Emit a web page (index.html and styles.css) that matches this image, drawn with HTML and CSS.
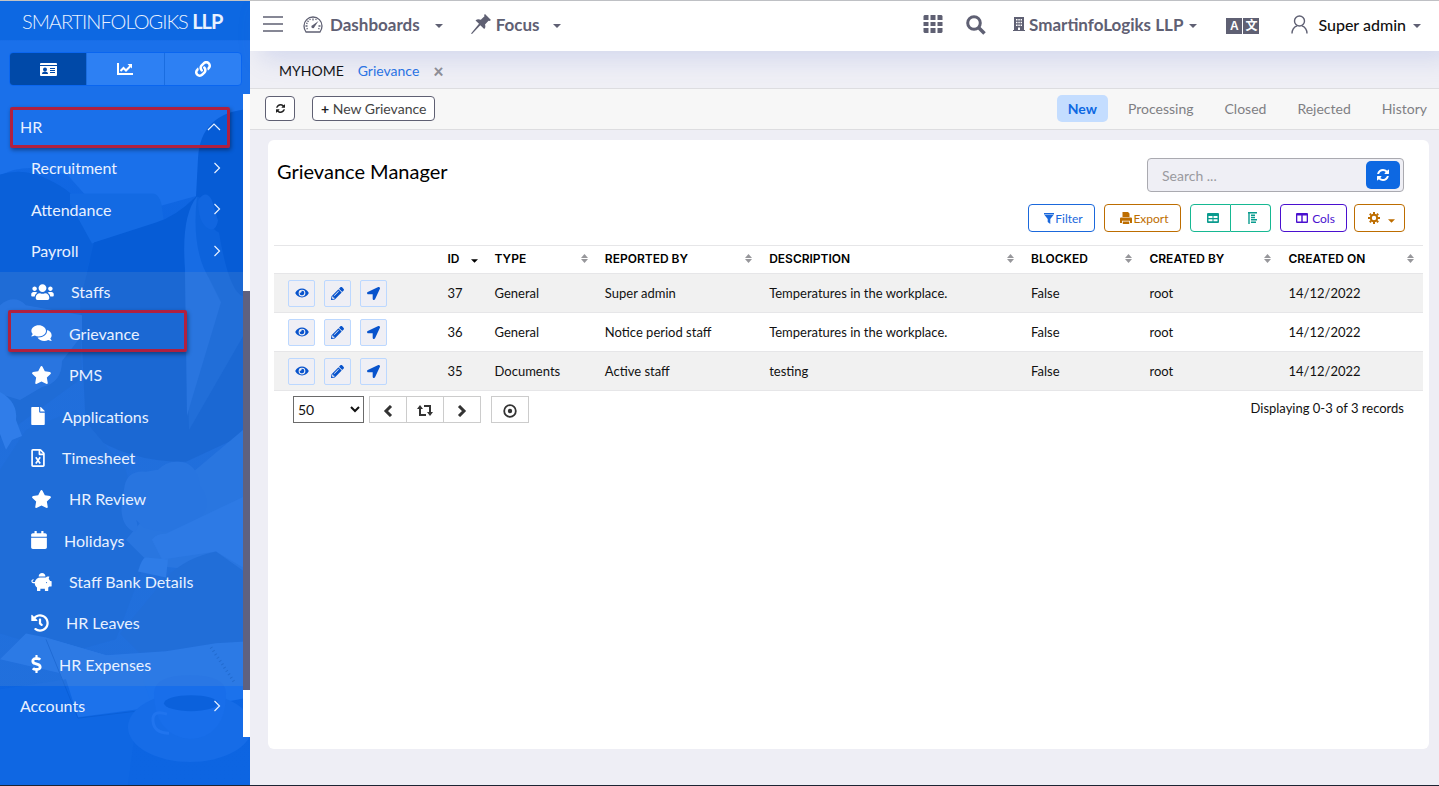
FILE: index.html
```
<!DOCTYPE html>
<html lang="en">
  <head>
    <meta charset="utf-8">
    <title>Grievance Manager</title>
    <link rel="stylesheet" href="styles.css">
  </head>
  <body>
    <!-- icon set -->
    <svg class="sprite" aria-hidden="true">
      <symbol id="i-users" viewBox="0 0 640 512"><path d="M96 224c35.3 0 64-28.7 64-64s-28.7-64-64-64-64 28.7-64 64 28.7 64 64 64zm448 0c35.3 0 64-28.7 64-64s-28.7-64-64-64-64 28.7-64 64 28.7 64 64 64zm32 32h-64c-17.6 0-33.5 7.1-45.1 18.6 40.3 22.1 68.9 62 75.1 109.4h66c17.7 0 32-14.3 32-32v-32c0-35.3-28.7-64-64-64zm-256 0c61.9 0 112-50.1 112-112S381.9 32 320 32 208 82.1 208 144s50.1 112 112 112zm76.8 32h-8.3c-20.8 10-43.9 16-68.5 16s-47.6-6-68.5-16h-8.3C179.6 288 128 339.6 128 403.2V432c0 26.5 21.5 48 48 48h288c26.5 0 48-21.5 48-48v-28.8c0-63.6-51.6-115.2-115.2-115.2zm-223.7-13.4C161.5 263.1 145.6 256 128 256H64c-35.3 0-64 28.7-64 64v32c0 17.7 14.3 32 32 32h65.9c6.3-47.4 34.9-87.3 75.2-109.4z"/></symbol>
      <symbol id="i-comments" viewBox="0 0 576 512"><path d="M416 192c0-88.4-93.1-160-208-160S0 103.6 0 192c0 34.3 14.1 65.9 38 92-13.4 30.2-35.5 54.2-35.8 54.5-2.2 2.3-2.8 5.7-1.5 8.7S4.8 352 8 352c36.6 0 66.9-12.3 88.7-25 32.2 15.7 70.3 25 111.3 25 114.9 0 208-71.6 208-160zm122 220c23.9-26 38-57.7 38-92 0-66.9-53.5-124.2-129.3-148.1.9 6.6 1.3 13.3 1.3 20.1 0 105.9-107.7 192-240 192-10.8 0-21.3-.8-31.7-1.9C207.8 439.6 281.8 480 368 480c41 0 79.1-9.2 111.3-25 21.8 12.7 52.1 25 88.7 25 3.2 0 6.1-1.9 7.3-4.8 1.3-2.9.7-6.3-1.5-8.7-.3-.3-22.4-24.2-35.8-54.5z"/></symbol>
      <symbol id="i-star" viewBox="0 0 576 512"><path d="M259.3 17.8L194 150.2 47.9 171.5c-26.2 3.8-36.7 36.1-17.7 54.6l105.7 103-25 145.5c-4.5 26.3 23.2 46 46.4 33.7L288 439.6l130.7 68.7c23.2 12.2 50.9-7.4 46.4-33.7l-25-145.5 105.7-103c19-18.5 8.5-50.8-17.7-54.6L382 150.2 316.7 17.8c-11.7-23.6-45.6-23.9-57.4 0z"/></symbol>
      <symbol id="i-file" viewBox="0 0 384 512"><path d="M224 136V0H24C10.7 0 0 10.7 0 24v464c0 13.3 10.7 24 24 24h336c13.3 0 24-10.7 24-24V160H248c-13.2 0-24-10.8-24-24zm160-14.1v6.1H256V0h6.1c6.4 0 12.5 2.5 17 7l97.9 98c4.5 4.5 7 10.6 7 16.9z"/></symbol>
      <symbol id="i-excel" viewBox="0 0 384 512"><path d="M369.9 97.9L286 14C277 5 264.8-.1 252.1-.1H48C21.5 0 0 21.5 0 48v416c0 26.5 21.5 48 48 48h288c26.5 0 48-21.5 48-48V131.9c0-12.7-5.1-25-14.1-34zM332.1 128H256V51.9l76.1 76.1zM48 464V48h160v104c0 13.3 10.7 24 24 24h104v288H48z"/><path d="M130 236l124 178M254 236L130 414" stroke="currentColor" stroke-width="48"/></symbol>
      <symbol id="i-calendar" viewBox="0 0 448 512"><path d="M12 192h424c6.6 0 12 5.4 12 12v260c0 26.5-21.5 48-48 48H48c-26.5 0-48-21.5-48-48V204c0-6.6 5.4-12 12-12zm436-44v-36c0-26.5-21.5-48-48-48h-48V12c0-6.600-5.400-12-12-12h-40c-6.600 0-12 5.400-12 12v52H160V12c0-6.600-5.400-12-12-12h-40c-6.600 0-12 5.400-12 12v52H48C21.500 64 0 85.500 0 112v36c0 6.600 5.400 12 12 12h424c6.600 0 12-5.400 12-12z"/></symbol>
      <symbol id="i-piggy" viewBox="0 0 576 512"><path d="M560 224h-29.500c-8.800-20-21.600-37.700-37.400-52.500L512 96h-32c-29.400 0-55.400 13.500-73 34.300-7.600-1.100-15.100-2.300-23-2.300H256c-77.400 0-141.900 55-156.800 128H56c-14.800 0-26.500-13.500-23.500-28.800C34.700 215.800 45.400 208 57 208h1c3.300 0 6-2.700 6-6v-20c0-3.300-2.700-6-6-6-28.500 0-53.900 20.400-57.500 48.600C-3.900 258.800 22.700 288 56 288h40c0 52.200 25.400 98.100 64 127.300V496c0 8.800 7.200 16 16 16h64c8.800 0 16-7.200 16-16v-48h128v48c0 8.800 7.200 16 16 16h64c8.800 0 16-7.200 16-16v-80.700c11.800-8.900 22.300-19.400 31.300-31.300H560c8.800 0 16-7.200 16-16V240c0-8.800-7.200-16-16-16zm-128 64c-8.800 0-16-7.200-16-16s7.200-16 16-16 16 7.200 16 16-7.200 16-16 16zM256 96h128c5.400 0 10.700.4 15.900.8 0-.3.1-.5.1-.8 0-53-43-96-96-96s-96 43-96 96c0 2.100.5 4.100.6 6.200 15.200-3.900 31-6.200 47.400-6.200z"/></symbol>
      <symbol id="i-history" viewBox="0 0 512 512"><path d="M504 255.531c.253 136.640-111.180 248.372-247.820 248.468-59.015.042-113.223-20.530-155.822-54.911-11.077-8.940-11.905-25.541-1.839-35.607l11.267-11.267c8.609-8.609 22.353-9.551 31.891-1.984C173.062 425.135 212.781 440 256 440c101.705 0 184-82.311 184-184 0-101.705-82.311-184-184-184-48.814 0-93.149 18.969-126.068 49.932l50.754 50.754c10.080 10.080 2.941 27.314-11.313 27.314H24c-8.837 0-16-7.163-16-16V38.627c0-14.254 17.234-21.393 27.314-11.314l49.372 49.372C129.209 34.136 189.552 8 256 8c136.810 0 247.747 110.780 248 247.531zm-180.912 78.784l9.823-12.630c8.138-10.463 6.253-25.542-4.210-33.679L288 256.349V152c0-13.255-10.745-24-24-24h-16c-13.255 0-24 10.745-24 24v135.651l65.409 50.874c10.463 8.137 25.541 6.253 33.679-4.210z"/></symbol>
      <symbol id="i-dollar" viewBox="0 0 288 512"><path d="M209.200 233.400l-108-31.600C88.700 198.200 80 186.500 80 173.500c0-16.300 13.200-29.500 29.500-29.500h66.300c12.200 0 24.200 3.700 34.200 10.500 6.100 4.100 14.300 3.100 19.500-2l34.800-34c7.100-6.900 6.100-18.400-1.800-24.500C238 74.800 207.400 64.100 176 64V16c0-8.800-7.200-16-16-16h-32c-8.800 0-16 7.200-16 16v48h-2.500C45.800 64-5.400 118.700.5 183.600c4.200 46.100 39.400 83.600 83.800 96.600l102.500 30c12.500 3.700 21.200 15.300 21.200 28.300 0 16.300-13.200 29.500-29.500 29.500h-66.300C100 368 88 364.300 78 357.500c-6.100-4.100-14.300-3.100-19.500 2l-34.800 34c-7.100 6.900-6.100 18.400 1.800 24.500 24.500 19.200 55.100 29.900 86.500 30v48c0 8.800 7.200 16 16 16h32c8.800 0 16-7.200 16-16v-48.200c46.600-.9 90.300-28.600 105.700-72.700 21.500-61.600-14.600-124.800-72.500-141.700z"/></symbol>
      <symbol id="i-eye" viewBox="0 0 576 512"><path d="M572.520 241.400C518.290 135.590 410.930 64 288 64S57.680 135.640 3.480 241.410a32.350 32.350 0 0 0 0 29.190C57.710 376.410 165.070 448 288 448s230.320-71.640 284.520-177.410a32.350 32.350 0 0 0 0-29.190zM288 400a144 144 0 1 1 144-144 143.930 143.930 0 0 1-144 144zm0-240a95.310 95.310 0 0 0-25.310 3.790 47.850 47.850 0 0 1-66.900 66.900A95.780 95.780 0 1 0 288 160z"/></symbol>
      <symbol id="i-pencil" viewBox="0 0 512 512"><path d="M497.900 142.100l-46.100 46.100c-4.700 4.700-12.300 4.700-17 0l-111-111c-4.700-4.700-4.700-12.300 0-17l46.100-46.100c18.700-18.700 49.100-18.700 67.900 0l60.100 60.100c18.800 18.700 18.800 49.100 0 67.900zM284.200 99.800L21.600 362.400.4 483.900c-2.900 16.400 11.400 30.600 27.800 27.800l121.500-21.300 262.600-262.600c4.700-4.700 4.700-12.300 0-17l-111-111c-4.800-4.700-12.400-4.700-17.100 0zM124.100 339.900c-5.500-5.500-5.500-14.300 0-19.800l154-154c5.500-5.500 14.300-5.500 19.800 0s5.500 14.300 0 19.800l-154 154c-5.500 5.500-14.300 5.500-19.800 0zM88 424h48v36.300l-64.500 11.300-31.100-31.100L51.700 376H88v48z"/></symbol>
      <symbol id="i-arrow" viewBox="0 0 512 512"><path d="M444.520 3.520L28.740 195.420c-47.970 22.390-31.980 92.750 19.190 92.750h175.910v175.910c0 51.170 70.360 67.170 92.750 19.190l191.900-415.780c15.990-38.390-25.590-79.970-63.970-63.970z"/></symbol>
      <symbol id="i-link" viewBox="0 0 512 512"><path d="M326.612 185.391c59.747 59.809 58.927 155.698.36 214.590-.11.12-.24.25-.36.37l-67.200 67.200c-59.270 59.270-155.699 59.262-214.960 0-59.270-59.260-59.270-155.700 0-214.960l37.106-37.106c9.840-9.840 26.786-3.300 27.294 10.606.648 17.722 3.826 35.527 9.690 52.721 1.986 5.822.567 12.262-3.783 16.612l-13.087 13.087c-28.026 28.026-28.905 73.660-1.155 101.960 28.024 28.579 74.086 28.749 102.325.51l67.200-67.190c28.191-28.191 28.073-73.757 0-101.830-3.701-3.694-7.429-6.564-10.341-8.569a16.037 16.037 0 0 1-6.947-12.606c-.396-10.567 3.348-21.456 11.698-29.806l21.054-21.055c5.521-5.521 14.182-6.199 20.584-1.731a152.482 152.482 0 0 1 20.522 17.197zM467.547 44.449c-59.261-59.262-155.690-59.270-214.960 0l-67.200 67.200c-.12.12-.25.25-.36.37-58.566 58.892-59.387 154.781.36 214.590a152.454 152.454 0 0 0 20.521 17.196c6.402 4.468 15.064 3.789 20.584-1.731l21.054-21.055c8.350-8.350 12.094-19.239 11.698-29.806a16.037 16.037 0 0 0-6.947-12.606c-2.912-2.005-6.640-4.875-10.341-8.569-28.073-28.073-28.191-73.639 0-101.830l67.200-67.190c28.239-28.239 74.300-28.069 102.325.51 27.750 28.300 26.872 73.934-1.155 101.960l-13.087 13.087c-4.350 4.350-5.769 10.790-3.783 16.612 5.864 17.194 9.042 34.999 9.690 52.721.509 13.906 17.454 20.446 27.294 10.606l37.106-37.106c59.271-59.259 59.271-155.699.001-214.959z"/></symbol>
      <symbol id="i-refresh" viewBox="0 128 1536 1536"><path d="M1511 1056q0 5-1 7-64 268-268 434.500T764 1664q-146 0-282.500-55T238 1452l-129 129q-19 19-45 19t-45-19-19-45v-448q0-26 19-45t45-19h448q26 0 45 19t19 45-19 45l-137 137q71 66 161 102t187 36q134 0 250-65t186-179q11-17 53-117 8-23 30-23h192q13 0 22.500 9.500t9.500 22.500zm25-800v448q0 26-19 45t-45 19h-448q-26 0-45-19t-19-45 19-45l138-138Q969 384 768 384q-134 0-250 65T332 628q-11 17-53 117-8 23-30 23H50q-13 0-22.500-9.500T18 736v-7q65-268 270-434.500T768 128q146 0 284 55.500T1297 340l130-129q19-19 45-19t45 19 19 45z"/></symbol>
      <symbol id="i-idcard" viewBox="0 0 17 13"><path fill-rule="evenodd" d="M1 0h15a1 1 0 0 1 1 1v1H0V1a1 1 0 0 1 1-1zM0 3h17v9a1 1 0 0 1-1 1H1a1 1 0 0 1-1-1zm5 1.500a2 2 0 1 0 0 4 2 2 0 0 0 0-4zM2 11h6c0-1.500-1-2.200-2-2.200H4c-1 0-2 .7-2 2.200zM10 5v1h5V5zm0 2v1h5V7zm0 2v1h5V9z"/></symbol>
      <symbol id="i-chart" viewBox="0 0 16 12"><path d="M1 0v11h15M3.500 8l3-3 2.500 2.500L13.500 3" fill="none" stroke="currentColor" stroke-width="2"/><path d="M10.500 1H15v4.500z"/></symbol>
      <symbol id="i-down" viewBox="0 0 8 4"><path d="M0 0h8L4 4z"/></symbol>
      <symbol id="i-right" viewBox="0 0 8 12"><path d="M1.500 1l5 5-5 5" fill="none" stroke="currentColor" stroke-width="1.200"/></symbol>
      <symbol id="i-up" viewBox="0 0 14 8"><path d="M1 7l6-6 6 6" fill="none" stroke="currentColor" stroke-width="1.200"/></symbol>
      <symbol id="i-sort" viewBox="0 0 7 9"><path d="M0 4l3.500-4L7 4zM0 5h7L3.500 9z"/></symbol>
      <symbol id="i-bars" viewBox="0 0 20 16"><path d="M0 1h20M0 8h20M0 15h20" stroke="currentColor" stroke-width="1.400"/></symbol>
      <symbol id="i-gauge" viewBox="0 0 20 17"><g fill="none" stroke="currentColor" stroke-width="1.300"><path d="M3 16Q1 13 1 10a9 9 0 0 1 18 0q0 3-2 6z"/><path d="M10 2.500v2M4.500 4.700l1 1.200M2.500 10h2M17.500 10h-2M6.800 3l.5 1M13.200 3l-.5 1M3.200 7l1.300.6M3.500 13l1.200-.6M16.500 13l-1.200-.6"/></g><path d="M15.500 5l-4.200 6.200a1.500 1.500 0 1 1-1.800-1.900z"/></symbol>
      <symbol id="i-pin" viewBox="0 0 20 20"><path d="M14 0l6 6-1.500 1-1-.3-3.500 3.800c.8 2 .3 3.500-.8 4.500L9.300 11.200 1 20l-1-.5 8-9.700L4.500 6.500C6 5 8 5 9.800 5.800l3.700-3.500-.4-1.300z"/></symbol>
      <symbol id="i-grid" viewBox="0 0 19 18"><path d="M1 0h4v5H0V1zM7 0h5v5H7zM14 0h4l1 1v4h-5zM0 7h5v4H0zM7 7h5v4H7zM14 7h5v4h-5zM0 13h5v5H1l-1-1zM7 13h5v5H7zM14 13h5v4l-1 1h-4z"/></symbol>
      <symbol id="i-search" viewBox="0 0 20 20"><circle cx="8" cy="8" r="6.300" fill="none" stroke="currentColor" stroke-width="3"/><path d="M12.500 12.500l6 6" stroke="currentColor" stroke-width="3.500"/></symbol>
      <symbol id="i-building" viewBox="0 0 12 14"><path fill-rule="evenodd" d="M1 0h10v13h1v1H0v-1h1zm2 2v1.500h1.500V2zm2.300 0v1.500h1.500V2zm2.300 0v1.500H9V2zM3 4.700v1.500h1.500V4.700zm2.300 0v1.500h1.500V4.700zm2.300 0v1.500H9V4.700zM3 7.400v1.500h1.500V7.400zm2.300 0v1.500h1.500V7.400zm2.300 0v1.500H9V7.400zM5 10.500V13h2v-2.500z"/></symbol>
      <symbol id="i-user" viewBox="0 0 17 19"><g fill="none" stroke="currentColor" stroke-width="1.400"><circle cx="8.500" cy="6" r="5"/><path d="M1 18.500c0-4 2-6.500 5-7.700M16 18.500c0-4-2-6.500-5-7.700"/></g></symbol>
      <symbol id="i-funnel" viewBox="0 0 10 11"><path d="M0 0h10v1.500H0zM.5 2h9L6.300 6v5l-2.600-2V6z"/></symbol>
      <symbol id="i-print" viewBox="0 0 12 12"><path fill-rule="evenodd" d="M2.500 0H8l1.500 1.500V5h-7zM1 5.500h10a1 1 0 0 1 1 1V11h-2V8.700H2V11H0V6.500a1 1 0 0 1 1-1zM2.800 9.500h6.400V12H2.800z"/></symbol>
      <symbol id="i-table" viewBox="0 0 12 10"><path fill-rule="evenodd" d="M1 0h10a1 1 0 0 1 1 1v8a1 1 0 0 1-1 1H1a1 1 0 0 1-1-1V1a1 1 0 0 1 1-1zm.5 3v2h4V3zm5 0v2h4V3zm-5 3.300v2h4v-2zm5 0v2h4v-2z"/></symbol>
      <symbol id="i-cols" viewBox="0 0 12 10"><path fill-rule="evenodd" d="M1 0h10a1 1 0 0 1 1 1v8a1 1 0 0 1-1 1H1a1 1 0 0 1-1-1V1a1 1 0 0 1 1-1zm.3 2.500v6h4v-6zm5.400 0v6h4v-6z"/></symbol>
      <symbol id="i-gantt" viewBox="0 0 10 12"><path d="M0 .7h9M1 0v12M3 3.200h4M3 5.500h4M3 7.800h6M3 10.200h5" fill="none" stroke="currentColor" stroke-width="1.400"/></symbol>
      <symbol id="i-cog" viewBox="0 0 12 12"><circle cx="6" cy="6" r="3.200" fill="none" stroke="currentColor" stroke-width="2"/><path d="M6 0v2M6 10v2M0 6h2M10 6h2M1.800 1.800l1.400 1.400M8.800 8.800l1.400 1.400M1.800 10.200l1.400-1.400M8.800 3.200l1.400-1.400" stroke="currentColor" stroke-width="2"/></symbol>
      <symbol id="i-prev" viewBox="0 0 10 12"><path d="M8 1L3 6l5 5" fill="none" stroke="currentColor" stroke-width="3"/></symbol>
      <symbol id="i-next" viewBox="0 0 10 12"><path d="M2 1l5 5-5 5" fill="none" stroke="currentColor" stroke-width="3"/></symbol>
      <symbol id="i-loop" viewBox="0 0 16 11"><path d="M3 2v8h6M7 1h6v8" fill="none" stroke="currentColor" stroke-width="2"/><path d="M0 4l3-4 3 4zM10 7h6l-3 4z"/></symbol>
      <symbol id="i-target" viewBox="0 0 14 14"><circle cx="7" cy="7" r="5.800" fill="none" stroke="currentColor" stroke-width="1.800"/><circle cx="7" cy="7" r="2.200"/></symbol>
    </svg>

    <div class="app">
      <aside class="sidebar">
        <!-- office scene behind the menu -->
        <svg class="sidebar-art" viewBox="0 0 250 786" preserveAspectRatio="none" aria-hidden="true">
          <defs>
            <linearGradient id="desk" x1="0" y1="0" x2="0" y2="1">
              <stop offset="0" stop-color="#1a6fe9"/>
              <stop offset=".35" stop-color="#0c63df"/>
              <stop offset="1" stop-color="#0d65e2"/>
            </linearGradient>
          </defs>
          <rect width="250" height="786" fill="url(#desk)"/>
          <path d="M0 40h250v80q-46 0-52 75l-90 25-40-45q-40-15-68 0z" fill="#1a70ea"/>
          <!-- hair and suits -->
          <path d="M0 174q24-7 46 4 32 14 42 38 8 14 14 32l-12 10q-8 30-10 60l2 60-82 60z" fill="#0a60d9"/>
          <path d="M70 193h82q8 0 10 14l2 14-72 22-22-40z" fill="#136ae3"/>
          <path d="M250 108q-50 4-52 50l-2 38q-20 20-40 26l-62 20-14 60 6 130q40 30 100 30l64-30z" fill="#065cd6"/>
          <path d="M243 214v122l-54 94-4-150q-2-60 12-84l6 2q2 28 16 34 10 60 24 64z" fill="#0d63dc"/>
          <path d="M197 196q-16 20-12 72l2 148 4-14 30-100-12-24q-18-30-12-82z" fill="#176ce4"/>
          <path d="M198 200q8-12 14 0l6 20q-2 12-10 8-10-6-10-28z" fill="#1166e0"/>
          <!-- left face and hand -->
          <path d="M0 305q14-12 26 0l56 10v20l-20 26q0 22-20 26L20 400 0 394z" fill="#176ce5"/>
          <path d="M0 392q18 10 16 28l6 16-10 4-6 10-6-16z" fill="#1f76f0"/>
          <path d="M26 430l50-20 50 60 20 90-30 80-50 14-66-20V470z" fill="#0b62dc"/>
          <!-- papers and hands -->
          <path d="M160 500l-34 40 26 26 91 9V430z" fill="#176de6"/>
          <path d="M124 490q2-20 22-18l12-2q8-8 18-8 20-2 24 24 14 20-2 34-22 18-54 8l-8-8q4 10-2 12-18-8-10-42z" fill="#166ce6"/>
          <path d="M152 540q4-6 14-6l84-40v78l-34-20-54 8z" fill="#1c72ec"/>
          <path d="M138 572q4-14 8-14l22 2-2 18z" fill="#1d74ee"/>
          <path d="M166 578q20-20 50-26l34 24v70l-110 8-20-20z" fill="#0d63dc"/>
          <path d="M0 660l26-26 20 4 60 18 60-4 50-8 34-2v56l-84 16-84 4-4-40z" fill="#1b72ec"/>
          <path d="M45 638l33 82 76-9-18-50-30-5z" fill="#1c72eb"/>
          <path d="M0 690l66-10 12 38 60-8-10 76H0z" fill="#0f67e3"/>
          <path d="M46 640l32 79 58-7" fill="none" stroke="#0a5fd8" stroke-width="1"/>
          <path d="M211 648l24 36" stroke="#0e60d2" stroke-width="3" stroke-dasharray="1 3"/>
          <!-- cup -->
          <ellipse cx="190" cy="728" rx="62" ry="35" fill="#166ce7"/>
          <path d="M154 694q0-18 36-18t36 18q0 44-36 46-36-4-36-46z" fill="#186eea"/>
          <ellipse cx="191" cy="704" rx="27" ry="8" fill="#0b61dc"/>
          <path d="M167 715q-15-5-14 7t16 12" fill="none" stroke="#2074ee" stroke-width="3"/>
        </svg>
        <div class="brand">SMARTINFOLOGIKS <b>LLP</b></div>
        <div class="modes">
          <button class="active" aria-label="Modules"><svg width="17" height="13"><use href="#i-idcard"/></svg></button>
          <button aria-label="Reports"><svg width="16" height="12"><use href="#i-chart"/></svg></button>
          <button aria-label="Links"><svg width="16" height="16"><use href="#i-link"/></svg></button>
        </div>
        <div class="menu-area">
          <nav class="menu">
            <a href="#" class="marked mark-hr">HR <svg width="14" height="8"><use href="#i-up"/></svg></a>
            <a href="#" class="group">Recruitment <svg width="8" height="12"><use href="#i-right"/></svg></a>
            <a href="#" class="group">Attendance <svg width="8" height="12"><use href="#i-right"/></svg></a>
            <a href="#" class="group">Payroll <svg width="8" height="12"><use href="#i-right"/></svg></a>
            <div class="submenu">
              <a href="#"><svg width="23" height="18"><use href="#i-users"/></svg>Staffs</a>
              <a href="#" class="marked mark-item"><svg width="21" height="18"><use href="#i-comments"/></svg>Grievance</a>
              <a href="#"><svg width="21" height="18"><use href="#i-star"/></svg>PMS</a>
              <a href="#"><svg width="14" height="18"><use href="#i-file"/></svg>Applications</a>
              <a href="#"><svg width="14" height="18"><use href="#i-excel"/></svg>Timesheet</a>
              <a href="#"><svg width="21" height="18"><use href="#i-star"/></svg>HR Review</a>
              <a href="#"><svg width="16" height="18"><use href="#i-calendar"/></svg>Holidays</a>
              <a href="#"><svg width="21" height="18"><use href="#i-piggy"/></svg>Staff Bank Details</a>
              <a href="#"><svg width="18" height="18"><use href="#i-history"/></svg>HR Leaves</a>
              <a href="#"><svg width="11" height="18"><use href="#i-dollar"/></svg>HR Expenses</a>
            </div>
            <a href="#">Accounts <svg width="8" height="12"><use href="#i-right"/></svg></a>
          </nav>
          <div class="track"><div class="thumb"></div></div>
        </div>
      </aside>

      <div class="main">
        <header class="topbar">
          <button class="burger" aria-label="Toggle menu"><svg width="20" height="16"><use href="#i-bars"/></svg></button>
          <a href="#" class="top-link dash"><svg width="20" height="17"><use href="#i-gauge"/></svg>Dashboards <svg class="caret" width="8" height="4"><use href="#i-down"/></svg></a>
          <a href="#" class="top-link focus"><svg width="20" height="20"><use href="#i-pin"/></svg>Focus <svg class="caret" width="8" height="4"><use href="#i-down"/></svg></a>
          <div class="top-right">
            <button aria-label="Apps"><svg width="20" height="18"><use href="#i-grid"/></svg></button>
            <button class="find" aria-label="Search"><svg width="20" height="20"><use href="#i-search"/></svg></button>
            <a href="#" class="top-link org"><svg width="12" height="14"><use href="#i-building"/></svg>SmartinfoLogiks LLP <svg class="caret" width="8" height="4"><use href="#i-down"/></svg></a>
            <button class="lang" aria-label="Language"><span>A</span><span>文</span></button>
            <a href="#" class="top-link user"><svg width="17" height="19"><use href="#i-user"/></svg>Super admin <svg class="caret" width="8" height="4"><use href="#i-down"/></svg></a>
          </div>
        </header>

        <div class="tabs">
          <a href="#">MYHOME</a>
          <a href="#" class="current">Grievance</a>
          <button aria-label="Close tab">×</button>
        </div>

        <div class="toolbar">
          <button class="outline reload" aria-label="Reload"><svg width="9" height="9"><use href="#i-refresh"/></svg></button>
          <button class="outline"><b>+</b> New Grievance</button>
          <nav class="states">
            <a href="#" class="current">New</a>
            <a href="#">Processing</a>
            <a href="#">Closed</a>
            <a href="#">Rejected</a>
            <a href="#">History</a>
          </nav>
        </div>

        <main class="card">
          <div class="card-head">
            <h1>Grievance Manager</h1>
            <div class="search">
              <input type="text" placeholder="Search ..." aria-label="Search">
              <button aria-label="Refresh"><svg width="12" height="12"><use href="#i-refresh"/></svg></button>
            </div>
          </div>
          <div class="actions">
            <button class="blue"><svg width="10" height="11"><use href="#i-funnel"/></svg>Filter</button>
            <button class="orange"><svg width="12" height="12"><use href="#i-print"/></svg>Export</button>
            <div class="pair">
              <button aria-label="Table view"><svg width="12" height="10"><use href="#i-table"/></svg></button>
              <button aria-label="Timeline view"><svg width="10" height="12"><use href="#i-gantt"/></svg></button>
            </div>
            <button class="purple"><svg width="12" height="10"><use href="#i-cols"/></svg>Cols</button>
            <button class="orange gear" aria-label="Settings"><svg width="12" height="12"><use href="#i-cog"/></svg><svg width="7" height="4"><use href="#i-down"/></svg></button>
          </div>

          <table>
            <colgroup>
              <col class="c-act"><col class="c-id"><col class="c-type"><col class="c-rep"><col class="c-desc"><col class="c-block"><col class="c-by"><col class="c-on">
            </colgroup>
            <thead>
              <tr>
                <th></th>
                <th><div class="th sorted">ID <svg width="7" height="4"><use href="#i-down"/></svg></div></th>
                <th><div class="th">TYPE <svg width="7" height="9"><use href="#i-sort"/></svg></div></th>
                <th><div class="th">REPORTED BY <svg width="7" height="9"><use href="#i-sort"/></svg></div></th>
                <th><div class="th">DESCRIPTION <svg width="7" height="9"><use href="#i-sort"/></svg></div></th>
                <th><div class="th">BLOCKED <svg width="7" height="9"><use href="#i-sort"/></svg></div></th>
                <th><div class="th">CREATED BY <svg width="7" height="9"><use href="#i-sort"/></svg></div></th>
                <th><div class="th">CREATED ON <svg width="7" height="9"><use href="#i-sort"/></svg></div></th>
              </tr>
            </thead>
            <tbody>
              <tr>
                <td><div class="row-actions">
                  <button aria-label="View"><svg width="14" height="12"><use href="#i-eye"/></svg></button>
                  <button aria-label="Edit"><svg width="13" height="13"><use href="#i-pencil"/></svg></button>
                  <button aria-label="Send"><svg width="13" height="13"><use href="#i-arrow"/></svg></button>
                </div></td>
                <td>37</td><td>General</td><td>Super admin</td><td>Temperatures in the workplace.</td><td>False</td><td>root</td><td>14/12/2022</td>
              </tr>
              <tr>
                <td><div class="row-actions">
                  <button aria-label="View"><svg width="14" height="12"><use href="#i-eye"/></svg></button>
                  <button aria-label="Edit"><svg width="13" height="13"><use href="#i-pencil"/></svg></button>
                  <button aria-label="Send"><svg width="13" height="13"><use href="#i-arrow"/></svg></button>
                </div></td>
                <td>36</td><td>General</td><td>Notice period staff</td><td>Temperatures in the workplace.</td><td>False</td><td>root</td><td>14/12/2022</td>
              </tr>
              <tr>
                <td><div class="row-actions">
                  <button aria-label="View"><svg width="14" height="12"><use href="#i-eye"/></svg></button>
                  <button aria-label="Edit"><svg width="13" height="13"><use href="#i-pencil"/></svg></button>
                  <button aria-label="Send"><svg width="13" height="13"><use href="#i-arrow"/></svg></button>
                </div></td>
                <td>35</td><td>Documents</td><td>Active staff</td><td>testing</td><td>False</td><td>root</td><td>14/12/2022</td>
              </tr>
            </tbody>
          </table>

          <div class="pager">
            <select aria-label="Rows per page"><option>50</option></select>
            <div class="pages">
              <button aria-label="Previous"><svg width="10" height="12"><use href="#i-prev"/></svg></button>
              <button aria-label="Reload page"><svg width="16" height="11"><use href="#i-loop"/></svg></button>
              <button aria-label="Next"><svg width="10" height="12"><use href="#i-next"/></svg></button>
            </div>
            <button class="target" aria-label="Focus"><svg width="14" height="14"><use href="#i-target"/></svg></button>
            <span class="count">Displaying 0-3 of 3 records</span>
          </div>
        </main>
      </div>
    </div>
  </body>
</html>
```
FILE: styles.css
```
* {
  box-sizing: border-box;
}
body {
  margin: 0;
  font-family: Lato, "Open Sans", sans-serif;
  font-size: 14px;
  color: #111;
  background: #eeeef5;
}
a {
  color: inherit;
  text-decoration: none;
}
button {
  font: inherit;
  color: inherit;
  padding: 0;
  border: none;
  background: none;
  cursor: pointer;
}
svg {
  display: block;
  flex: none;
  fill: currentColor;
}
.sprite {
  display: none;
}
.app {
  display: flex;
  min-height: 100vh;
  border-top: 1px solid #c4c4c4;
  border-bottom: 1px solid #1d2433;
}

/* sidebar */
.sidebar {
  position: relative;
  flex: none;
  display: flex;
  flex-direction: column;
  width: 250px;
  color: #e8f1ff;
}
.sidebar-art {
  position: absolute;
  top: 0;
  left: 0;
  width: 100%;
  height: 100%;
  z-index: -1;
}
.brand {
  height: 39px;
  line-height: 40px;
  padding-left: 22px;
  font-size: 20px;
  font-weight: 300;
  letter-spacing: -1px;
  white-space: nowrap;
  background: #0d68e2;
}
.brand b {
  font-weight: 700;
}
.modes {
  display: flex;
  margin: 12px 8px 0 9px;
  height: 34px;
  border: 1px solid #0a66f0;
  border-radius: 4px;
  background: #2d80f3;
  overflow: hidden;
}
.modes button {
  flex: 1;
  display: flex;
  align-items: center;
  justify-content: center;
  color: #fff;
}
.modes button + button {
  border-left: 1px solid #1a6de0;
}
.modes .active {
  background: #0049a8;
}
.menu-area {
  display: flex;
  flex: 1;
  margin: 8px 0 48px;
}
.menu {
  flex: 1;
  padding-top: 13px;
  font-size: 16px;
  line-height: 1.46;
}
.menu a {
  position: relative;
  display: flex;
  align-items: center;
  justify-content: space-between;
  padding: 8px 22px 10px 20px;
}
.menu .group {
  padding-left: 31px;
}
.submenu {
  background: rgba(120, 160, 200, .19);
}
.submenu a {
  justify-content: flex-start;
  gap: 17px;
  padding-left: 31px;
}
.submenu svg {
  color: #fff;
}
/* red frames around the active path */
.marked::after {
  content: "";
  position: absolute;
  border: 3px solid #b0203f;
  border-radius: 2px;
  box-shadow: 1px 2px 4px rgba(0, 0, 0, .4);
}
.mark-hr::after {
  inset: 0 13px 0 10px;
}
.mark-item::after {
  inset: -4px 56px 3px 8px;
}
.track {
  width: 7px;
  background: #fff;
}
.thumb {
  height: 62%;
  margin-top: 197px;
  background: #5f617f;
}

/* top bar */
.main {
  flex: 1;
  display: flex;
  flex-direction: column;
  min-width: 0;
}
.topbar {
  display: flex;
  align-items: center;
  height: 50px;
  padding: 0 18px 4px 13px;
  color: #5f6073;
  background: #fff;
  box-shadow: 12px 8px 24px rgba(100, 125, 210, .2);
  z-index: 1;
}
.top-link {
  display: flex;
  align-items: center;
  gap: 7px;
  font-size: 17px;
  font-weight: 700;
}
.caret {
  margin: 4px 0 0 8px;
}
.dash {
  margin-left: 20px;
}
.focus {
  margin-left: 28px;
  gap: 5px;
}
.top-right {
  display: flex;
  align-items: center;
  margin-left: auto;
}
.find {
  margin: 2px 27px 0 23px;
}
.org {
  gap: 4px;
}
.org .caret {
  margin-left: 2px;
}
.lang {
  display: flex;
  gap: 1px;
  margin: 3px 32px 0 29px;
}
.lang span {
  width: 16px;
  height: 16px;
  font: 700 12px/16px "Liberation Sans", "Noto Sans CJK SC", sans-serif;
  text-align: center;
  color: #fff;
  background: #5f6073;
}
.user {
  gap: 10px;
  font-size: 16px;
  font-weight: 500;
  color: #111;
}
.user svg {
  color: #5f6073;
}
.user .caret {
  margin-left: -3px;
}

/* open tabs */
.tabs {
  display: flex;
  align-items: center;
  height: 37px;
  padding: 2px 29px 0;
  gap: 14px;
  background: #efeff5;
}
.tabs .current {
  color: #2a74e4;
}
.tabs button {
  font-size: 18px;
  font-weight: 900;
  line-height: 16px;
  color: #8f8f95;
}
.toolbar {
  display: flex;
  align-items: center;
  height: 42px;
  padding: 0 1px 1px 15px;
  gap: 17px;
  background: #f7f7f7;
  border: solid #dddde0;
  border-width: 1px 0;
}
.outline {
  height: 25px;
  padding: 0 8px;
  border: 1px solid #5f6073;
  border-radius: 4px;
  background: #fff;
  color: #444;
}
.outline b {
  color: #222;
}
.reload {
  display: flex;
  align-items: center;
  justify-content: center;
  width: 30px;
  color: #222;
}
.states {
  display: flex;
  gap: 9px;
  margin-left: auto;
  color: #7f7f84;
}
.states a {
  padding: 0 11px;
  line-height: 27px;
  border-radius: 5px;
}
.states .current {
  font-weight: 700;
  color: #0d68e2;
  background: #c4ddff;
}

/* card */
.card {
  flex: 1;
  margin: 10px 10px 36px 18px;
  padding: 18px 6px;
  border-radius: 6px;
  background: #fff;
}
.card-head {
  display: flex;
  justify-content: space-between;
  padding: 0 19px 0 3px;
}
h1 {
  margin: 0;
  font-size: 20px;
  font-weight: 400;
  line-height: 26px;
  color: #000;
}
.search {
  display: flex;
  width: 257px;
  height: 34px;
  padding: 2px 3px;
  border: 1px solid #aaaab0;
  border-radius: 4px;
  background: #efeff5;
}
.search input {
  flex: 1;
  min-width: 0;
  padding: 0 11px;
  border: none;
  background: none;
  font: inherit;
}
.search input::placeholder {
  color: #9a9a9f;
}
.search button {
  display: flex;
  align-items: center;
  justify-content: center;
  width: 34px;
  border-radius: 5px;
  color: #fff;
  background: #0d68e2;
}
.actions {
  display: flex;
  justify-content: flex-end;
  gap: 9px;
  margin: 12px 18px 13px 0;
  font-size: 12px;
}
.actions button {
  display: flex;
  align-items: center;
  justify-content: center;
  gap: 1px;
  height: 28px;
  width: 67px;
  padding-left: 4px;
  border: 1px solid;
  border-radius: 4px;
}
.actions .blue {
  color: #1a68dc;
}
.actions .orange {
  width: 77px;
  color: #bd6d00;
}
.actions .purple {
  gap: 4px;
  color: #4a10cf;
}
.actions .gear {
  width: 51px;
  gap: 8px;
  margin-left: -2px;
}
.gear svg + svg {
  margin-top: 5px;
}
.pair {
  display: flex;
  color: #0a9b8e;
}
.pair button {
  width: 41px;
  border-color: #16b892;
}
.pair button:first-child {
  border-radius: 4px 0 0 4px;
}
.pair button + button {
  width: 40px;
  border-left: none;
  border-radius: 0 4px 4px 0;
}

/* records */
table {
  width: 100%;
  table-layout: fixed;
  border-collapse: collapse;
}
.c-act { width: 14.4%; }
.c-id { width: 4.1%; }
.c-type { width: 9.6%; }
.c-rep { width: 14.3%; }
.c-desc { width: 22.8%; }
.c-block { width: 10.3%; }
.c-by { width: 12.1%; }
.c-on { width: 12.4%; }
tr {
  border: solid #e6e6e8;
  border-width: 1px 0;
}
th {
  height: 28px;
  padding: 0 9px 2px 8px;
  font: 600 12px "Inter", sans-serif;
  text-align: left;
  color: #000;
}
.th {
  display: flex;
  align-items: center;
  justify-content: space-between;
  white-space: nowrap;
}
.th svg {
  color: #97979b;
}
.sorted svg {
  margin-top: 5px;
  color: #000;
}
td {
  height: 39px;
  padding: 0 8px;
  font-size: 13px;
}
tbody tr:nth-child(odd) {
  background: #f1f1f1;
}
.row-actions {
  display: flex;
  gap: 9px;
  padding-left: 6px;
}
.row-actions button {
  display: flex;
  align-items: center;
  justify-content: center;
  width: 27px;
  height: 27px;
  border: 1px solid #bcd8ff;
  border-radius: 2px;
  color: #0853cc;
  background: #efeff5;
}

.pager {
  display: flex;
  padding: 5px 19px 0;
}
.pager select {
  width: 71px;
  height: 27px;
  border: 1px solid #6b6b6b;
  background: #fff;
  font: inherit;
  color: #111;
}
.pages {
  display: flex;
  margin: 0 10px 0 5px;
}
.pager button {
  display: flex;
  align-items: center;
  justify-content: center;
  width: 38px;
  height: 27px;
  padding-top: 2px;
  border: 1px solid #ccc;
  color: #333;
}
.pages button + button {
  margin-left: -1px;
}
.count {
  margin-left: auto;
  font-size: 13px;
  line-height: 25px;
}
```
